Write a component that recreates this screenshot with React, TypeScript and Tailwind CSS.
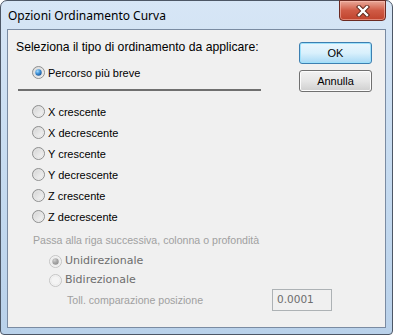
import React from 'react';

const sans = { fontFamily: '"Liberation Sans", Arial, sans-serif' };
const wide = { fontFamily: '"DejaVu Sans", Verdana, sans-serif' };

interface RadioProps {
  checked?: boolean;
  disabled?: boolean;
}

// Windows 7 style radio glyph
const Radio: React.FC<RadioProps> = ({ checked, disabled }) => {
  const ring = disabled ? '#c4c4c4' : '#8e8f8f';
  const fillA = disabled ? '#f4f4f4' : '#cfcfcf';
  const fillB = disabled ? '#f4f4f4' : '#fbfbfb';
  const id = disabled ? 'rd' : 're';
  return (
    <svg width="13" height="13" viewBox="0 0 13 13" className="shrink-0">
      <defs>
        <linearGradient id={`${id}-fill`} x1="0" y1="0" x2="1" y2="1">
          <stop offset="0" stopColor={fillA} />
          <stop offset="1" stopColor={fillB} />
        </linearGradient>
        <radialGradient id={`${id}-dot`} cx="0.35" cy="0.3" r="0.8">
          <stop offset="0" stopColor={disabled ? '#d0d0d0' : '#a6dcff'} />
          <stop offset="0.5" stopColor={disabled ? '#a8a8a8' : '#3b8fd6'} />
          <stop offset="1" stopColor={disabled ? '#8c8c8c' : '#1b4f8f'} />
        </radialGradient>
      </defs>
      <circle cx="6.5" cy="6.5" r="6" fill={`url(#${id}-fill)`} stroke={ring} strokeWidth="1" />
      <circle cx="6.5" cy="6.5" r="4.5" fill="none" stroke={disabled ? '#ececec' : '#e4e4e4'} strokeWidth="1" />
      {checked && <circle cx="6.5" cy="6.5" r="3.2" fill={`url(#${id}-dot)`} />}
    </svg>
  );
};

const RadioRow: React.FC<{ label: string; checked?: boolean }> = ({ label, checked }) => (
  <div className="flex h-[21px] items-center gap-[3px] pl-[24px] text-[11px] text-black">
    <Radio checked={checked} />
    <span className="leading-[14px]">{label}</span>
  </div>
);

const axisOptions = [
  'X crescente',
  'X decrescente',
  'Y crescente',
  'Y decrescente',
  'Z crescente',
  'Z decrescente',
];

export default function App() {
  return (
    <div className="h-[335px] w-[393px] bg-white">
      <div className="flex h-[335px] w-[393px] flex-col rounded-t-[7px] rounded-b-[4px] border border-[#4d5766] bg-gradient-to-b from-[#d7e6f6] via-[#c6dbf0] to-[#b9d1ea]">
        {/* Title bar */}
        <div className="flex h-[28px] items-start justify-between">
          <span
            className="self-center pl-[7px] pt-[1px] text-[12px] text-black"
            style={{ fontFamily: '"Noto Sans", "Open Sans", sans-serif' }}
          >
            Opzioni Ordinamento Curva
          </span>
          <div className="-mt-px mr-[6px] flex h-[21px] w-[47px] items-center justify-center rounded-b-[4px] border border-[#6b2a22] bg-gradient-to-b from-[#e8a899] via-[#cf5a45] to-[#c0432c] shadow-[inset_0_0_0_1px_rgba(255,200,190,0.5)]">
            <svg width="14" height="12" viewBox="0 0 14 12">
              <path d="M3 2 L11 10 M11 2 L3 10" stroke="#5a2418" strokeWidth="4.2" strokeLinecap="square" />
              <path d="M3 2 L11 10 M11 2 L3 10" stroke="#ffffff" strokeWidth="2.4" strokeLinecap="square" />
            </svg>
          </div>
        </div>

        {/* Client area */}
        <div className="flex-1 px-[6px] pb-[6px]">
          <div className="h-full border border-[#7a8ba2] bg-[#f0f0f0]" style={sans}>
            <div className="flex h-[62px]">
              <div className="flex-1 pl-[8px] pt-[10px]">
                <div className="text-[12.2px] leading-[14px] text-black">
                  Seleziona il tipo di ordinamento da applicare:
                </div>
                <div className="-ml-[8px] mt-[8px]">
                  <RadioRow label="Percorso più breve" checked />
                </div>
                <div className="ml-[2px] mt-[6px] h-[2px] w-[243px] bg-[#6f6f6f]" />
              </div>
              <div className="flex flex-col gap-[6px] pr-[13px] pt-[12px]">
                <button className="h-[22px] w-[73px] rounded-[3px] border border-[#3c7fb1] bg-gradient-to-b from-[#eaf6fd] via-[#d9f0fc] to-[#a7d9f5] text-[11px] text-black shadow-[inset_0_0_0_1px_#9ee1fb]">
                  OK
                </button>
                <button className="h-[22px] w-[73px] rounded-[3px] border border-[#707070] bg-gradient-to-b from-[#f2f2f2] via-[#e6e6e6] to-[#cfcfcf] text-[11px] text-black shadow-[inset_0_0_0_1px_#fcfcfc]">
                  Annulla
                </button>
              </div>
            </div>

            <div className="mt-[9px]">
              {axisOptions.map((label) => (
                <RadioRow key={label} label={label} />
              ))}
            </div>

            <div className="mt-[6px] pl-[25px] text-[10.6px] leading-[14px] text-[#a0a0a0]">
              Passa alla riga successiva, colonna o profondità
            </div>

            <div className="mt-[4px] flex h-[20px] items-center gap-[3px] pl-[41px] text-[11px] text-[#6d6d6d]" style={wide}>
              <Radio checked disabled />
              <span className="leading-[14px]">Unidirezionale</span>
            </div>
            <div className="flex h-[18px] items-center gap-[3px] pl-[41px] text-[11px] text-[#6d6d6d]" style={wide}>
              <Radio disabled />
              <span className="leading-[14px]">Bidirezionale</span>
            </div>

            <div className="flex h-[22px] items-center pl-[59px]">
              <span className="w-[205px] text-[10.6px] leading-[14px] text-[#a0a0a0]">Toll. comparazione posizione</span>
              <div
                className="flex h-[22px] w-[60px] items-center border border-[#adb2b5] bg-[#f0f0f0] pl-[4px] text-[10.5px] text-[#6d6d6d]"
                style={wide}
              >
                0.0001
              </div>
            </div>
          </div>
        </div>
      </div>
    </div>
  );
}
